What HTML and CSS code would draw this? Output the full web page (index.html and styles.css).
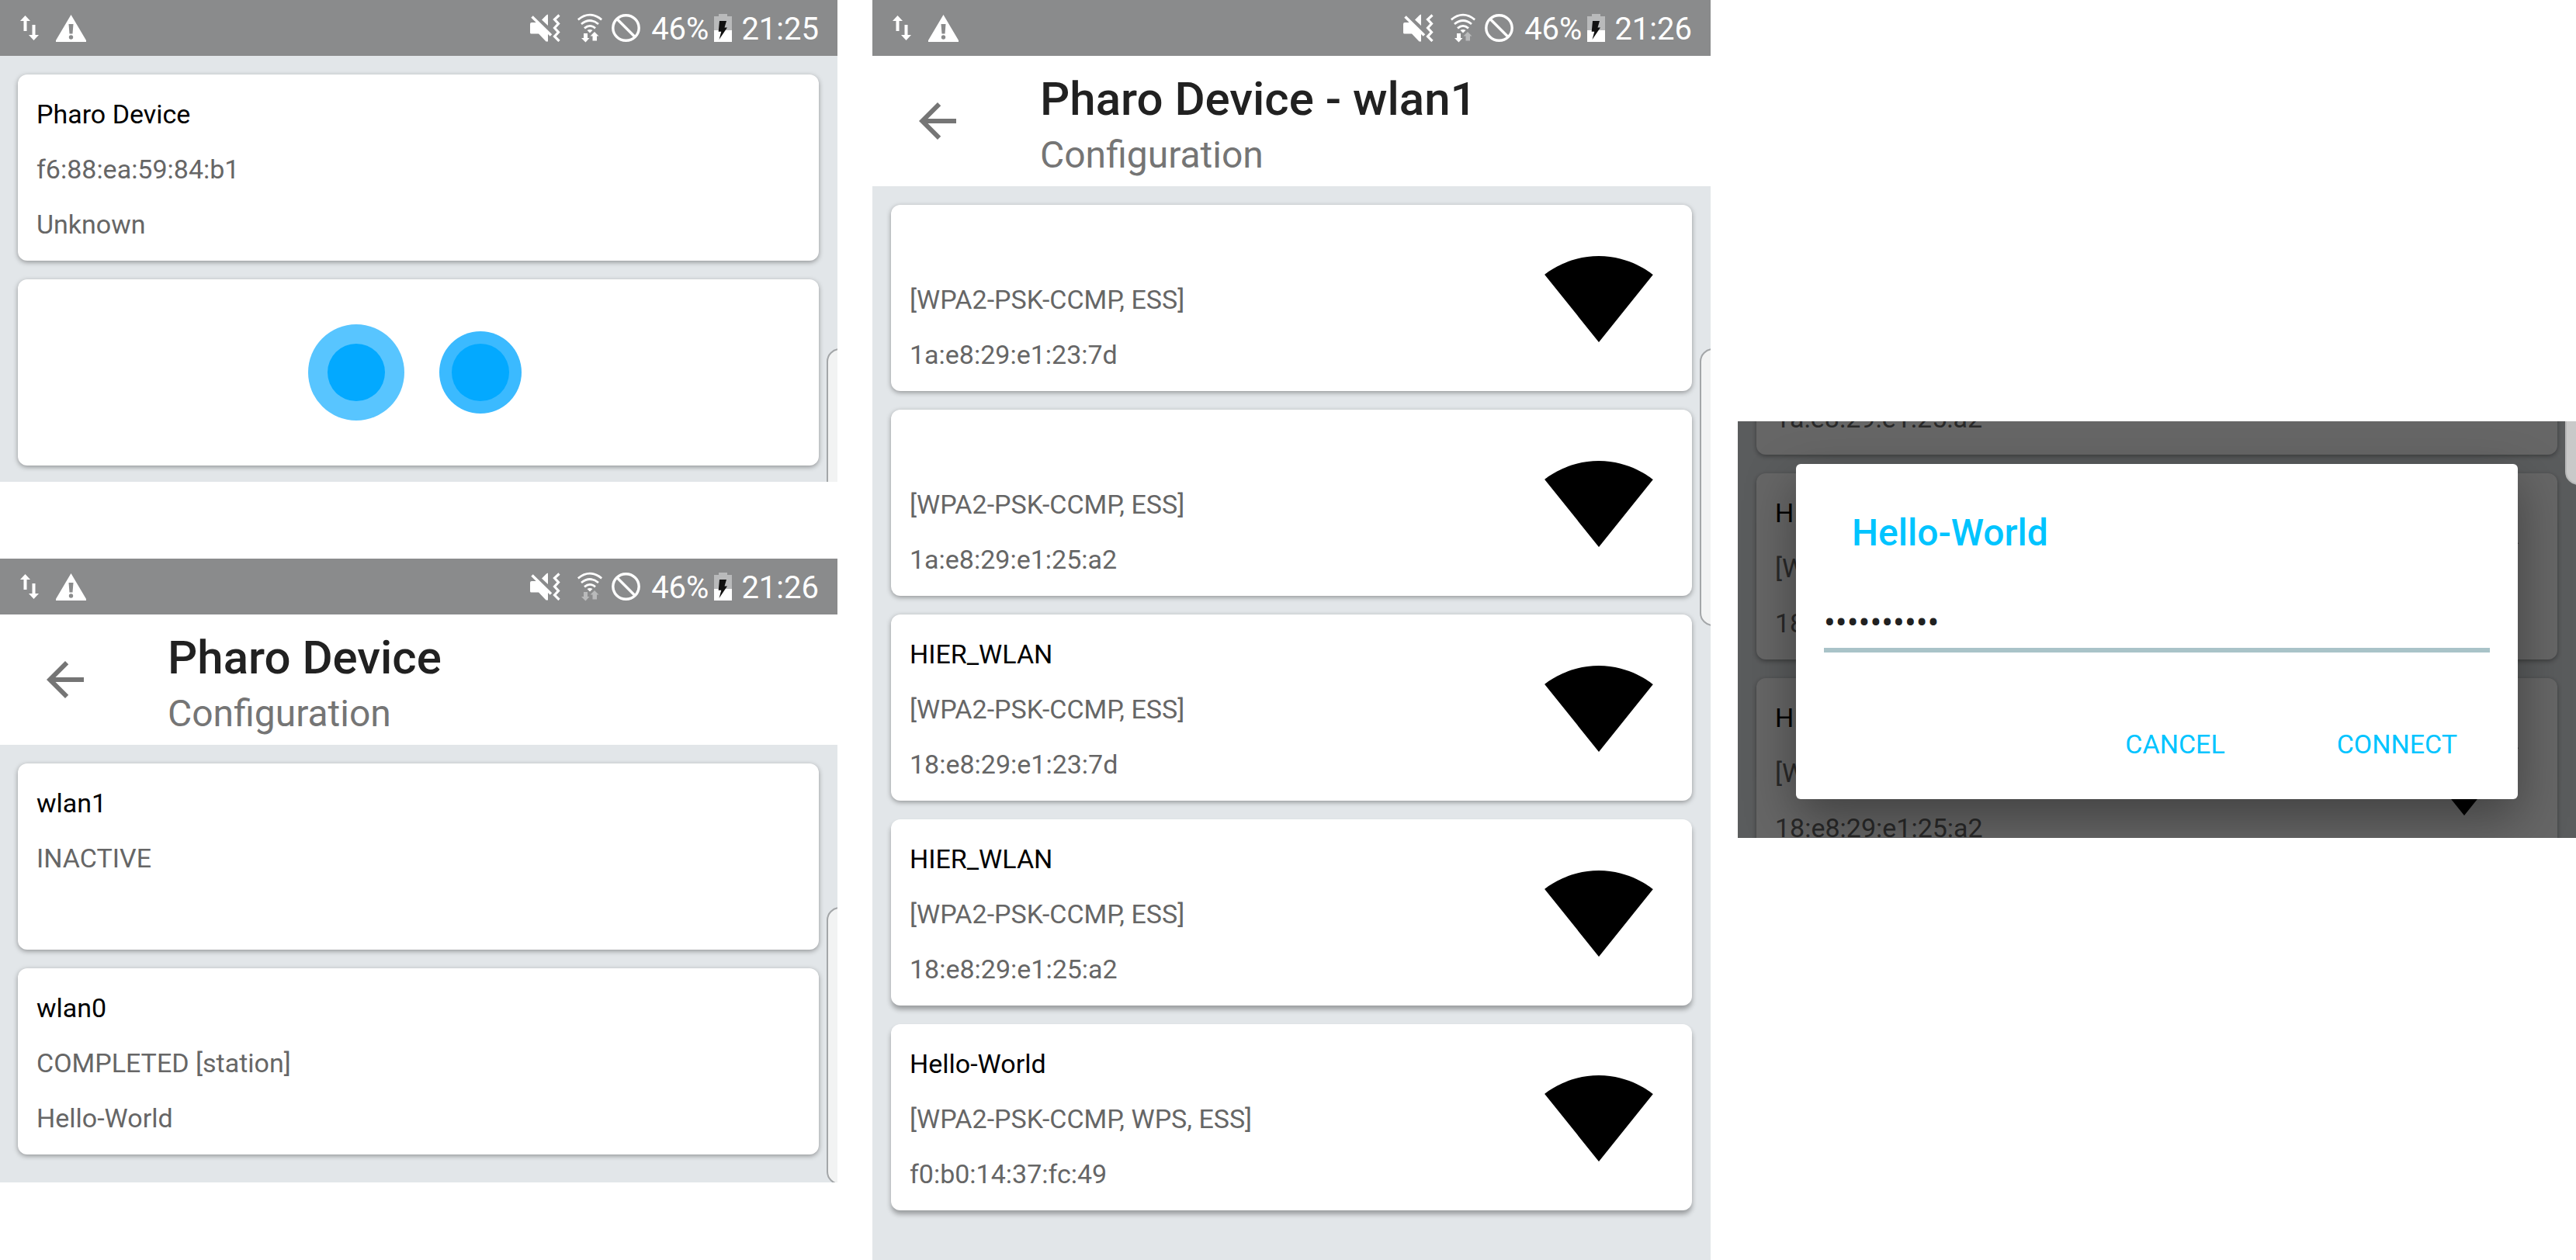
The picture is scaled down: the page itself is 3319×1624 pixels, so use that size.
FILE: index.html
```html
<!DOCTYPE html>
<html lang="en">
<head>
<meta charset="utf-8">
<meta name="viewport" content="width=device-width, initial-scale=1">
<title>Pharo Device configuration</title>
<link rel="stylesheet" href="styles.css">
</head>
<body>
<svg class="sprite" aria-hidden="true">
  <symbol id="i-data" viewBox="0 0 24 36">
    <path d="M6.500 2L13 9H8.500V22H4.500V9H0zM15.500 14h4v13H24l-6.500 7L11 27h4.500z"/>
  </symbol>
  <symbol id="i-warning" viewBox="0 0 39 36">
    <path fill-rule="evenodd" d="M19.500 1L39 34v2H0v-2zM16.500 13l1 12.500h4l1-12.500zM19.500 27.300a2.700 2.700 0 1 0 0 5.400 2.700 2.700 0 0 0 0-5.400z"/>
  </symbol>
  <symbol id="i-mute" viewBox="0 0 39 36">
    <path d="M0 13q0-2 2-2h8l13 13v11.500h-2.500L11 25.500H1.500Q0 25.500 0 24zM15 7.500L21 1.500l2-1V15z"/>
    <path d="M2.500 3.500L27 27.500" fill="none" stroke="currentColor" stroke-width="3.500"/>
    <path d="M37.500 1.500L31.500 7l5 5.500-5 5.500 5 5.500-5 5.500 6 6" fill="none" stroke="currentColor" stroke-width="3.200"/>
  </symbol>
  <symbol id="i-wifi" viewBox="0 0 32 38">
    <g fill="none" stroke="currentColor" stroke-width="2.800">
      <path d="M.8 8.300Q16-4 31.200 8.300"/>
      <path d="M5 14Q16 5 27 14"/>
      <path d="M9 19.300Q16 13.500 23 19.300"/>
    </g>
    <path d="M12.500 22Q16 19.800 19.500 22L16 25.500z"/>
  </symbol>
  <symbol id="i-down" viewBox="0 0 32 38">
    <path d="M8 26h5v6h2.500L10.500 37.500 5 32h3z"/>
  </symbol>
  <symbol id="i-up" viewBox="0 0 32 38">
    <path d="M22 24l5.500 5.500H25v6h-5.500v-6h-3z"/>
  </symbol>
  <symbol id="i-block" viewBox="0 0 37 36">
    <ellipse cx="18.500" cy="18" rx="16.700" ry="16.300" fill="none" stroke="currentColor" stroke-width="3.400"/>
    <path d="M7 6.500l23 23" fill="none" stroke="currentColor" stroke-width="3.400"/>
  </symbol>
  <symbol id="i-battery" viewBox="0 0 23 36">
    <path d="M6 0h11v3h6v18H0V3h6z" fill="#b9babb"/>
    <path d="M0 21h23v15H0z"/>
    <path d="M7 9h9l-2.500 8.500H17L6.500 33l2.800-10.300H5.700z" fill="#111"/>
  </symbol>
  <symbol id="i-back" viewBox="0 0 24 24">
    <path d="M20 11H7.830l5.590-5.590L12 4l-8 8 8 8 1.410-1.410L7.830 13H20z"/>
  </symbol>
  <symbol id="i-signal" viewBox="0 0 24 24">
    <path d="M12.010 21.490L23.640 7c-.45-.34-4.930-4-11.640-4C5.280 3 .81 6.660.36 7l11.630 14.490.010.010z"/>
  </symbol>
</svg>

<main class="board">
  <div class="column column--left">
    <section class="phone phone--search" aria-label="Device search">
      <div class="status">
        <svg class="s-data"><use href="#i-data"/></svg>
        <svg class="s-warning"><use href="#i-warning"/></svg>
        <svg class="s-mute"><use href="#i-mute"/></svg>
        <svg class="s-wifi"><use href="#i-wifi"/><use href="#i-down"/><use href="#i-up"/></svg>
        <svg class="s-block"><use href="#i-block"/></svg>
        <span class="percent">46%</span>
        <svg class="s-battery"><use href="#i-battery"/></svg>
        <time>21:25</time>
      </div>
      <ul class="cards">
        <li class="card">
          <div class="card-text"><h2>Pharo Device</h2><p>f6:88:ea:59:84:b1</p><p>Unknown</p></div>
        </li>
        <li class="card card--loading">
          <svg class="loader" viewBox="0 0 320 160" role="img" aria-label="Searching">
            <circle cx="80" cy="80" r="62" fill="#58c5ff"/>
            <circle cx="80" cy="80" r="37" fill="#03a9ff"/>
            <circle cx="240" cy="80" r="53" fill="#3bbaff"/>
            <circle cx="240" cy="80" r="37" fill="#03a9ff"/>
          </svg>
        </li>
      </ul>
      <span class="edge"></span>
    </section>

    <section class="phone phone--interfaces" aria-label="Interfaces">
      <div class="status">
        <svg class="s-data"><use href="#i-data"/></svg>
        <svg class="s-warning"><use href="#i-warning"/></svg>
        <svg class="s-mute"><use href="#i-mute"/></svg>
        <svg class="s-wifi"><use href="#i-wifi"/><use class="idle" href="#i-down"/><use class="idle" href="#i-up"/></svg>
        <svg class="s-block"><use href="#i-block"/></svg>
        <span class="percent">46%</span>
        <svg class="s-battery"><use href="#i-battery"/></svg>
        <time>21:26</time>
      </div>
      <header class="toolbar">
        <button class="back" type="button" aria-label="Back"><svg><use href="#i-back"/></svg></button>
        <div class="heading"><h1>Pharo Device</h1><p>Configuration</p></div>
      </header>
      <ul class="cards">
        <li class="card">
          <div class="card-text"><h2>wlan1</h2><p>INACTIVE</p><p></p></div>
        </li>
        <li class="card">
          <div class="card-text"><h2>wlan0</h2><p>COMPLETED [station]</p><p>Hello-World</p></div>
        </li>
      </ul>
      <span class="edge"></span>
    </section>
  </div>

  <div class="column column--middle">
    <section class="phone phone--networks" aria-label="Networks">
      <div class="status">
        <svg class="s-data"><use href="#i-data"/></svg>
        <svg class="s-warning"><use href="#i-warning"/></svg>
        <svg class="s-mute"><use href="#i-mute"/></svg>
        <svg class="s-wifi"><use href="#i-wifi"/><use href="#i-down"/><use class="idle" href="#i-up"/></svg>
        <svg class="s-block"><use href="#i-block"/></svg>
        <span class="percent">46%</span>
        <svg class="s-battery"><use href="#i-battery"/></svg>
        <time>21:26</time>
      </div>
      <header class="toolbar">
        <button class="back" type="button" aria-label="Back"><svg><use href="#i-back"/></svg></button>
        <div class="heading"><h1>Pharo Device - wlan1</h1><p>Configuration</p></div>
      </header>
      <ul class="cards">
        <li class="card">
          <div class="card-text"><h2></h2><p>[WPA2-PSK-CCMP, ESS]</p><p>1a:e8:29:e1:23:7d</p></div>
          <svg class="signal"><use href="#i-signal"/></svg>
        </li>
        <li class="card">
          <div class="card-text"><h2></h2><p>[WPA2-PSK-CCMP, ESS]</p><p>1a:e8:29:e1:25:a2</p></div>
          <svg class="signal"><use href="#i-signal"/></svg>
        </li>
        <li class="card">
          <div class="card-text"><h2>HIER_WLAN</h2><p>[WPA2-PSK-CCMP, ESS]</p><p>18:e8:29:e1:23:7d</p></div>
          <svg class="signal"><use href="#i-signal"/></svg>
        </li>
        <li class="card card--raised">
          <div class="card-text"><h2>HIER_WLAN</h2><p>[WPA2-PSK-CCMP, ESS]</p><p>18:e8:29:e1:25:a2</p></div>
          <svg class="signal"><use href="#i-signal"/></svg>
        </li>
        <li class="card card--raised">
          <div class="card-text"><h2>Hello-World</h2><p>[WPA2-PSK-CCMP, WPS, ESS]</p><p>f0:b0:14:37:fc:49</p></div>
          <svg class="signal"><use href="#i-signal"/></svg>
        </li>
      </ul>
      <span class="edge"></span>
    </section>
  </div>

  <div class="column column--right">
    <section class="phone phone--connect" aria-label="Connect to network">
      <ul class="cards cards--scrolled" aria-hidden="true">
        <li class="card">
          <div class="card-text"><h2></h2><p></p><p>1a:e8:29:e1:25:a2</p></div>
        </li>
        <li class="card">
          <div class="card-text"><h2>HIER_WLAN</h2><p>[WPA2-PSK-CCMP, ESS]</p><p>18:e8:29:e1:23:7d</p></div>
          <svg class="signal"><use href="#i-signal"/></svg>
        </li>
        <li class="card">
          <div class="card-text"><h2>HIER_WLAN</h2><p>[WPA2-PSK-CCMP, ESS]</p><p>18:e8:29:e1:25:a2</p></div>
          <svg class="signal"><use href="#i-signal"/></svg>
        </li>
      </ul>
      <div class="scrim">
        <form class="dialog" role="dialog" aria-labelledby="network-name">
          <label class="dialog-title" id="network-name" for="passphrase">Hello-World</label>
          <input class="passphrase" id="passphrase" type="password" value="helloworld" autocomplete="off">
          <div class="actions">
            <button type="button">CANCEL</button>
            <button type="button">CONNECT</button>
          </div>
        </form>
      </div>
      <span class="edge edge--dimmed"></span>
    </section>
  </div>
</main>
</body>
</html>
```
FILE: styles.css
```css
* {
  box-sizing: border-box;
}

body {
  margin: 0;
  background: #fff;
  font-family: Roboto, "Liberation Sans", sans-serif;
  font-size: 34px;
}

h1, h2, p, ul {
  margin: 0;
  padding: 0;
  font-weight: 400;
}

svg {
  display: block;
  flex: none;
  fill: currentColor;
}

.sprite {
  position: absolute;
  width: 0;
  height: 0;
}

.board {
  display: grid;
  grid-template-columns: 1079fr 45fr 1080fr 35fr 1080fr;
}

.column {
  display: flex;
  flex-direction: column;
  min-width: 0;
}

.column--left {
  grid-column: 1;
  gap: 99px;
}

.column--middle {
  grid-column: 3;
}

.column--right {
  grid-column: 5;
  padding-top: 543px;
}

.phone {
  position: relative;
  overflow: hidden;
  background: #e2e6e9;
}

.phone--search {
  padding-bottom: 21px;
}

.phone--interfaces {
  padding-bottom: 36px;
}

.phone--networks {
  padding-bottom: 64px;
}

.phone--connect {
  height: 537px;
}

/* Status bar */

.status {
  display: flex;
  align-items: center;
  height: 72px;
  padding: 0 24px 0 26px;
  background: #8a8b8c;
  color: #fff;
  font-size: 40px;
  line-height: 72px;
}

.s-data {
  width: 24px;
  height: 36px;
  margin-right: 22px;
}

.s-warning {
  width: 39px;
  height: 36px;
  margin-right: auto;
}

.s-mute {
  width: 39px;
  height: 36px;
  margin-right: 22px;
}

.s-wifi {
  width: 32px;
  height: 38px;
  margin-right: 12px;
}

.s-block {
  width: 37px;
  height: 36px;
  margin-right: 14px;
}

.s-battery {
  width: 23px;
  height: 36px;
  margin: 0 12px 0 7px;
}

.percent,
.status time {
  padding-top: 4px;
}

.idle {
  color: #b9babb;
  fill: #b9babb;
}

/* Toolbar */

.toolbar {
  display: flex;
  align-items: center;
  height: 168px;
  background: #fff;
}

.back {
  width: 168px;
  height: 168px;
  margin-right: 48px;
  padding: 0 48px;
  border: 0;
  background: none;
  color: #757575;
}

.back svg {
  width: 72px;
  height: 72px;
}

.heading {
  padding-top: 16px;
  line-height: 72px;
  white-space: nowrap;
}

.heading h1 {
  color: #212121;
  font-size: 60px;
  font-weight: 500;
}

.heading p {
  color: #757575;
  font-size: 48px;
}

/* Cards */

.cards {
  display: flex;
  flex-direction: column;
  gap: 24px;
  padding: 24px 24px 0;
  list-style: none;
}

.column--left .cards {
  padding-left: 23px;
}

.card {
  display: flex;
  align-items: center;
  justify-content: space-between;
  height: 240px;
  padding: 0 48px 0 24px;
  border-radius: 12px;
  background: #fff;
  box-shadow: 0 2px 6px rgba(0, 0, 0, 0.36);
}

.card--raised {
  box-shadow: 0 5px 6px rgba(0, 0, 0, 0.32);
}

.card--loading {
  justify-content: center;
  padding: 0;
}

.card-text {
  padding-top: 5px;
  color: #666;
  line-height: 71px;
}

.card-text h2 {
  color: #000;
  font-size: 34px;
}

.card-text h2,
.card-text p {
  min-height: 71px;
}

.signal {
  width: 144px;
  height: 144px;
  color: #000;
}

.loader {
  width: 320px;
  height: 160px;
}

/* Edge panel handle, half hidden behind the right side of the screen */

.edge {
  position: absolute;
  top: 449px;
  right: -20px;
  width: 34px;
  height: 358px;
  border: 2px solid #a3a6a8;
  border-radius: 24px;
  background: #f2f3f3;
}

.edge--dimmed {
  top: -276px;
  border-color: #b9b9b9;
  background: #c9c9c9;
}

/* Connect dialog */

.cards--scrolled {
  margin-top: -221px;
}

.scrim {
  position: absolute;
  inset: 0;
  padding: 55px 75px;
  background: rgba(0, 0, 0, 0.6);
}

.dialog {
  display: flex;
  flex-direction: column;
  height: 432px;
  padding: 61px 36px 35px;
  border-radius: 6px;
  background: #fff;
  box-shadow: 0 24px 64px rgba(0, 0, 0, 0.36);
}

.dialog-title {
  padding-left: 36px;
  color: #00c4ff;
  font-size: 48px;
  font-weight: 500;
  line-height: 56px;
}

.passphrase {
  width: 100%;
  height: 84px;
  margin-top: 42px;
  padding: 14px 0 0;
  border: 0;
  border-bottom: 6px solid #a9c3c8;
  outline: 0;
  background: none;
  color: #212121;
  font: 44px/64px Roboto, sans-serif;
}

.actions {
  display: flex;
  justify-content: flex-end;
  gap: 96px;
  margin-top: auto;
  padding-right: 18px;
}

.actions button {
  height: 72px;
  padding: 0 24px;
  border: 0;
  background: none;
  color: #00c4ff;
  font: 34px/72px Roboto, sans-serif;
}
```
